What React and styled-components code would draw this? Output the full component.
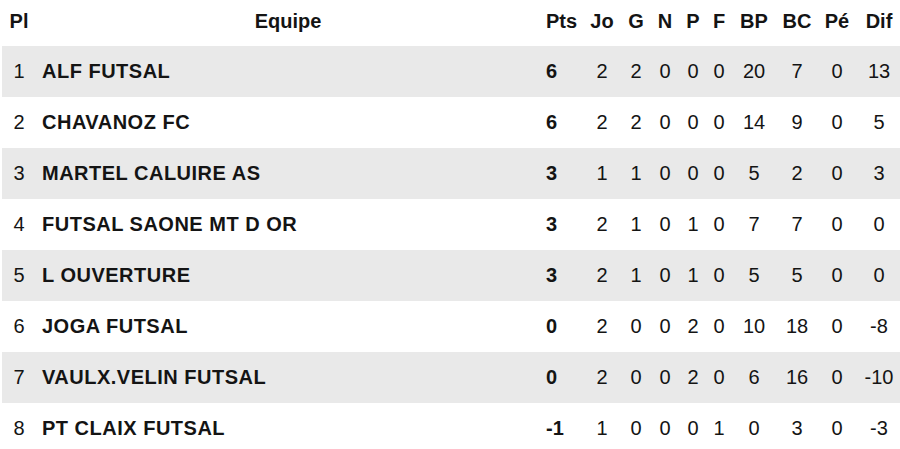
import React from "react";
import styled, { createGlobalStyle } from "styled-components";

const GlobalStyle = createGlobalStyle`
  html, body {
    margin: 0;
    padding: 0;
    background: #ffffff;
  }
  body {
    font-family: "Liberation Sans", Arial, sans-serif;
    color: #141414;
  }
`;

// column widths measured from the standings page
const COLUMNS = "34px 504px 44px 36px 32px 26px 30px 22px 48px 38px 42px 42px";

const Standings = styled.div`
  width: 898px;
  padding-left: 2px;
`;

const Row = styled.div`
  display: grid;
  grid-template-columns: ${COLUMNS};
  align-items: center;
  box-sizing: border-box;
  height: ${(p) => (p.$head ? "46px" : "51px")};
  padding-bottom: ${(p) => (p.$head ? "4px" : "0")};
  background: ${(p) => (p.$shaded ? "#e9e9e9" : "transparent")};
  font-size: 20px;
`;

const Cell = styled.div`
  text-align: ${(p) => p.$align || "center"};
  padding-left: ${(p) => p.$pad || 0}px;
  font-weight: ${(p) => (p.$bold ? 700 : 400)};
  white-space: nowrap;
`;

const TeamName = styled(Cell)`
  text-align: left;
  padding-left: 6px;
  font-weight: 700;
  letter-spacing: 0.5px;
`;

const teams = [
  { pl: 1, name: "ALF FUTSAL", stats: [6, 2, 2, 0, 0, 0, 20, 7, 0, 13] },
  { pl: 2, name: "CHAVANOZ FC", stats: [6, 2, 2, 0, 0, 0, 14, 9, 0, 5] },
  { pl: 3, name: "MARTEL CALUIRE AS", stats: [3, 1, 1, 0, 0, 0, 5, 2, 0, 3] },
  { pl: 4, name: "FUTSAL SAONE MT D OR", stats: [3, 2, 1, 0, 1, 0, 7, 7, 0, 0] },
  { pl: 5, name: "L OUVERTURE", stats: [3, 2, 1, 0, 1, 0, 5, 5, 0, 0] },
  { pl: 6, name: "JOGA FUTSAL", stats: [0, 2, 0, 0, 2, 0, 10, 18, 0, -8] },
  { pl: 7, name: "VAULX.VELIN FUTSAL", stats: [0, 2, 0, 0, 2, 0, 6, 16, 0, -10] },
  { pl: 8, name: "PT CLAIX FUTSAL", stats: [-1, 1, 0, 0, 0, 1, 0, 3, 0, -3] },
];

const heads = ["Pts", "Jo", "G", "N", "P", "F", "BP", "BC", "Pé", "Dif"];

export default function App() {
  return (
    <>
      <GlobalStyle />
      <Standings>
        <Row $head>
          <Cell $bold>Pl</Cell>
          <Cell $bold>Equipe</Cell>
          {heads.map((h, i) => (
            <Cell key={h} $bold $align={i === 0 ? "left" : "center"} $pad={i === 0 ? 6 : 0}>
              {h}
            </Cell>
          ))}
        </Row>
        {teams.map((t, idx) => (
          <Row key={t.pl} $shaded={idx % 2 === 0}>
            <Cell>{t.pl}</Cell>
            <TeamName>{t.name}</TeamName>
            {t.stats.map((v, i) => (
              <Cell
                key={i}
                $bold={i === 0}
                $align={i === 0 ? "left" : "center"}
                $pad={i === 0 ? 6 : 0}
              >
                {v}
              </Cell>
            ))}
          </Row>
        ))}
      </Standings>
    </>
  );
}
